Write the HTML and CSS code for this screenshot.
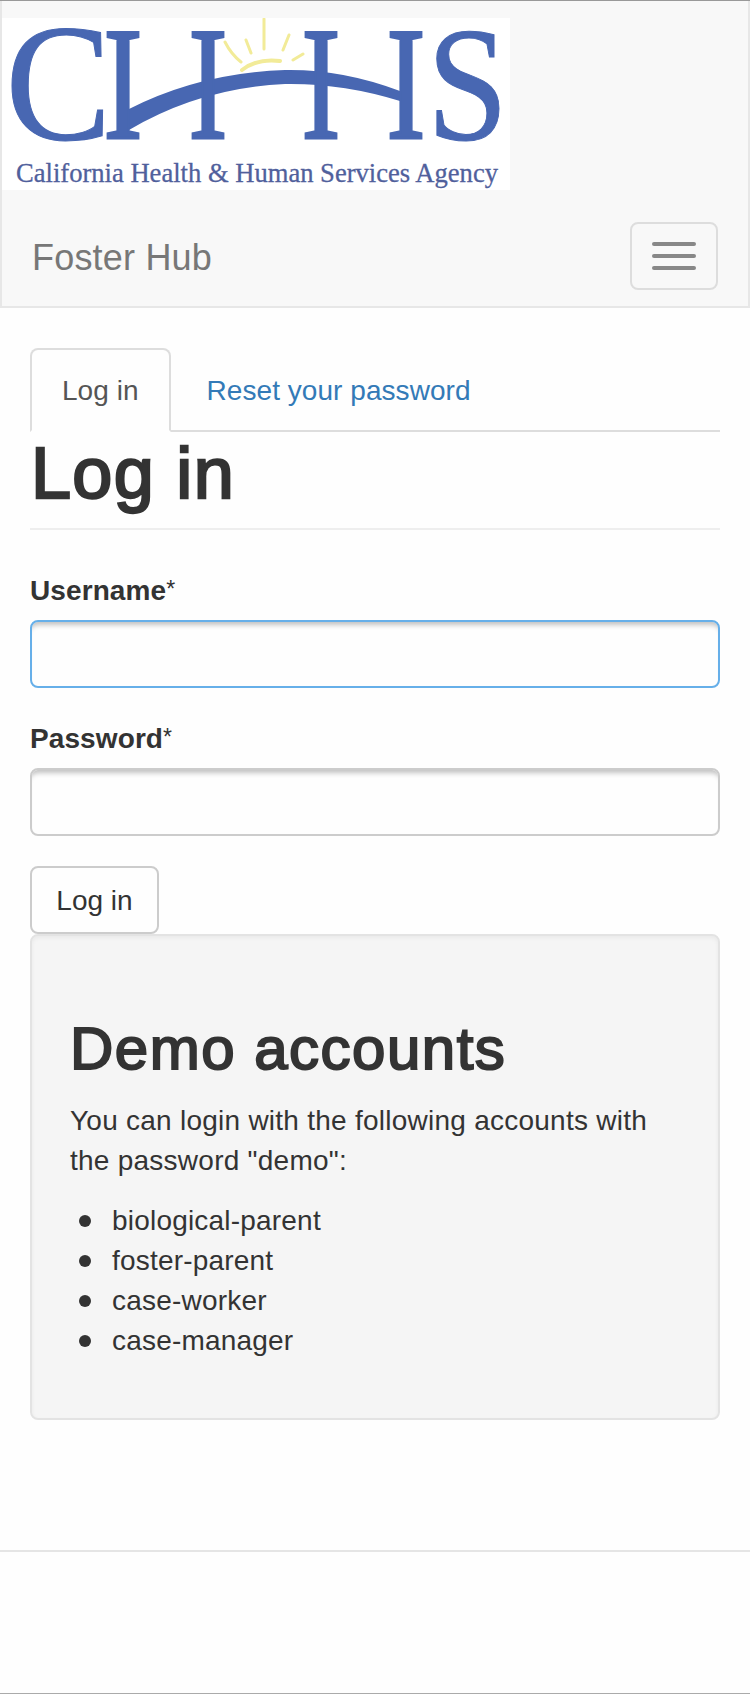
FILE: index.html
```html
<!DOCTYPE html>
<html lang="en">
<head>
<meta charset="utf-8">
<title>Log in | Foster Hub</title>
<link rel="stylesheet" href="styles.css">
</head>
<body>
<header class="navbar">
  <svg class="logo" viewBox="2 18 508 172" width="508" height="172" role="img" aria-label="CHHS California Health &amp; Human Services Agency">
    <rect x="2" y="18" width="508" height="172" fill="#fff"/>
    <g class="sun">
      <path d="M225 42Q231 54 241 62M246 40L251 53M264 19V49M289 35L283 50M293 60L303 54"/>
      <path d="M242 70Q258 58 280 61" stroke-width="4"/>
    </g>
    <path class="arc" d="M129 109Q200 73 285 70Q342 69 400 91V101Q342 83 285 84Q200 88 129 130Z"/>
    <g class="logo-letters">
      <text transform="translate(5.500 138.500) scale(.98 1.030)">C</text>
      <g class="stems">
        <text transform="translate(103.500 138) scale(.73 1)">I</text>
        <text transform="translate(188.500 138) scale(.73 1)">I</text>
        <text transform="translate(301.500 138) scale(.73 1)">I</text>
        <text transform="translate(386.500 138) scale(.73 1)">I</text>
      </g>
      <text transform="translate(427 139) scale(.9 1.010)">S</text>
    </g>
    <text class="tagline" x="16" y="181.500" textLength="482" lengthAdjust="spacingAndGlyphs">California Health &amp; Human Services Agency</text>
  </svg>
  <div class="navbar-row">
    <a class="brand">Foster Hub</a>
    <button class="toggle" type="button" aria-label="Toggle navigation"><span class="bar"></span><span class="bar"></span><span class="bar"></span></button>
  </div>
</header>
<main class="container">
  <nav class="tabs">
    <a class="tab active">Log in</a>
    <a class="tab">Reset your password</a>
  </nav>
  <h1 class="page-header">Log in</h1>
  <form class="form">
    <div class="group">
      <label class="label" for="user">Username<span class="required">*</span></label>
      <input class="input focused" id="user" type="text">
    </div>
    <div class="group">
      <label class="label" for="pass">Password<span class="required">*</span></label>
      <input class="input" id="pass" type="password">
    </div>
    <button class="submit" type="button">Log in</button>
  </form>
  <section class="well">
    <h2 class="well-title">Demo accounts</h2>
    <p class="intro">You can login with the following accounts with the password "demo":</p>
    <ul class="accounts">
      <li class="account">biological-parent</li>
      <li class="account">foster-parent</li>
      <li class="account">case-worker</li>
      <li class="account">case-manager</li>
    </ul>
  </section>
</main>
<footer class="footer"></footer>
</body>
</html>
```

FILE: styles.css
```css
* { box-sizing: border-box; }
body {
  margin: 0;
  height: 1694px;
  display: flex;
  flex-direction: column;
  border-top: 1px solid #999;
  border-bottom: 1px solid #aaa;
  background: #fefefe;
  color: #333;
  font: 28px/40px "Liberation Sans", Arial, sans-serif;
  letter-spacing: .2px;
}
.navbar {
  height: 307px;
  padding-top: 17px;
  background: #f8f8f8;
  border: 2px solid #e7e7e7;
  border-top: 0;
}
.logo { display: block; }
.sun { fill: none; stroke: #f2eb98; stroke-width: 3; stroke-linecap: round; }
.arc { fill: #4867b2; }
.logo-letters {
  fill: #4867b2;
  stroke: #4867b2;
  stroke-width: 1;
  font: 162px "Liberation Serif", serif;
  letter-spacing: 0;
}
.stems { stroke-width: 3; font-size: 160px; }
.tagline {
  fill: #50609c;
  stroke: #50609c;
  stroke-width: .3;
  font: 28px "Liberation Serif", serif;
  letter-spacing: 0;
}
.navbar-row {
  display: flex;
  justify-content: space-between;
  padding: 32px 30px 0;
}
.brand { font-size: 36px; line-height: 40px; padding-top: 16px; color: #777; }
.toggle {
  width: 88px;
  height: 68px;
  padding: 0 20px;
  display: flex;
  flex-direction: column;
  justify-content: center;
  gap: 8px;
  background: transparent;
  border: 2px solid #ddd;
  border-radius: 8px;
}
.bar { height: 4px; border-radius: 2px; background: #888; }
.container { padding: 40px 30px 0; }
.tabs { display: flex; gap: 4px; border-bottom: 2px solid #ddd; letter-spacing: .05px; }
.tab {
  height: 84px;
  margin-bottom: -2px;
  padding: 21px 30px 19px;
  border: 2px solid transparent;
  border-radius: 8px 8px 0 0;
  color: #337ab7;
}
.tab.active {
  color: #555;
  background: #fefefe;
  border-color: #ddd;
  border-bottom-color: transparent;
}
.page-header {
  height: 98px;
  margin: 0 0 40px;
  padding: 2px 0 0 1px;
  border-bottom: 2px solid #eee;
  font-size: 72px;
  line-height: 79px;
  font-weight: 400;
  letter-spacing: 1.3px;
  -webkit-text-stroke: 2.400px #333;
}
.group { margin-bottom: 30px; }
.label { display: block; padding-top: 1px; margin-bottom: 9px; font-weight: 700; letter-spacing: .1px; }
.required { display: inline-block; font-weight: 400; font-size: 23px; line-height: 1; vertical-align: 3px; }
.input {
  display: block;
  width: 100%;
  height: 68px;
  padding: 12px 24px;
  border: 2px solid #ccc;
  border-radius: 8px;
  background: #fefefe;
  box-shadow: inset 0 7px 5px -4px rgba(0, 0, 0, .24);
  font: inherit;
  outline: 0;
}
.input.focused { border-color: #66afe9; }
.submit {
  display: block;
  width: 129px;
  height: 68px;
  padding: 2px 0 0;
  border: 2px solid #ccc;
  border-radius: 8px;
  background: #fefefe;
  color: #333;
  font: inherit;
  letter-spacing: 0;
}
.well {
  height: 486px;
  padding: 80px 38px 0;
  border: 2px solid #e3e3e3;
  border-radius: 8px;
  background: #f5f5f5;
  box-shadow: inset 0 2px 4px rgba(0, 0, 0, .05);
}
.well-title {
  margin: 0 0 19px;
  font-size: 60px;
  line-height: 66px;
  font-weight: 400;
  letter-spacing: 1.500px;
  -webkit-text-stroke: 2px #333;
}
.intro { margin: 0 0 20px; letter-spacing: .25px; }
.accounts { margin: 0; padding: 0; list-style: none; }
.account { display: flex; align-items: center; gap: 21px; padding-left: 9px; }
.account::before { content: ""; width: 12px; height: 12px; border-radius: 50%; background: #333; }
.footer { margin-top: 130px; border-top: 2px solid #e5e5e5; }
```
